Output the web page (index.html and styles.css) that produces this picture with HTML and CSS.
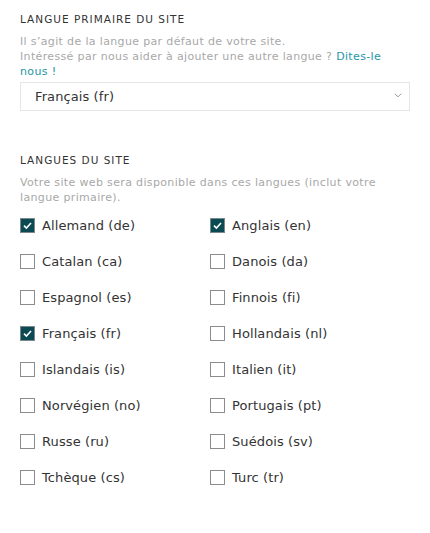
FILE: index.html
```html
<!DOCTYPE html>
<html lang="fr">
<head>
<meta charset="utf-8">
<link rel="stylesheet" href="styles.css">
</head>
<body>
<div class="page">
  <section class="group">
    <h2 class="label">LANGUE PRIMAIRE DU SITE</h2>
    <p class="help">Il s’agit de la langue par défaut de votre site.<br>Intéressé par nous aider à ajouter une autre langue ? <a href="#" class="link"><span>Dites-le</span> <span>nous !</span></a></p>
    <div class="select">
      <span>Français (fr)</span>
      <svg class="chev" width="8" height="5" viewBox="0 0 8 5"><path d="M0.8 0.8 L4 3.8 L7.2 0.8" fill="none" stroke="#9a9a9a" stroke-width="1"/></svg>
    </div>
  </section>
  <section class="group second">
    <h2 class="label">LANGUES DU SITE</h2>
    <p class="help">Votre site web sera disponible dans ces langues (inclut votre langue primaire).</p>
    <div class="grid">
      <label class="opt"><span class="box on"><svg viewBox="0 0 15 15" width="15" height="15"><path d="M4 7.6 L6.4 10 L11 5" fill="none" stroke="#fff" stroke-width="1.6"/></svg></span>Allemand (de)</label>
      <label class="opt"><span class="box on"><svg viewBox="0 0 15 15" width="15" height="15"><path d="M4 7.6 L6.4 10 L11 5" fill="none" stroke="#fff" stroke-width="1.6"/></svg></span>Anglais (en)</label>
      <label class="opt"><span class="box"></span>Catalan (ca)</label>
      <label class="opt"><span class="box"></span>Danois (da)</label>
      <label class="opt"><span class="box"></span>Espagnol (es)</label>
      <label class="opt"><span class="box"></span>Finnois (fi)</label>
      <label class="opt"><span class="box on"><svg viewBox="0 0 15 15" width="15" height="15"><path d="M4 7.6 L6.4 10 L11 5" fill="none" stroke="#fff" stroke-width="1.6"/></svg></span>Français (fr)</label>
      <label class="opt"><span class="box"></span>Hollandais (nl)</label>
      <label class="opt"><span class="box"></span>Islandais (is)</label>
      <label class="opt"><span class="box"></span>Italien (it)</label>
      <label class="opt"><span class="box"></span>Norvégien (no)</label>
      <label class="opt"><span class="box"></span>Portugais (pt)</label>
      <label class="opt"><span class="box"></span>Russe (ru)</label>
      <label class="opt"><span class="box"></span>Suédois (sv)</label>
      <label class="opt"><span class="box"></span>Tchèque (cs)</label>
      <label class="opt"><span class="box"></span>Turc (tr)</label>
    </div>
  </section>
</div>
</body>
</html>
```
FILE: styles.css
```css
html, body { margin: 0; padding: 0; background: #fff; }
body { font-family: "DejaVu Sans", "Open Sans", sans-serif; color: #333; }
.page { padding: 12px 20px 0 20px; width: 390px; }
.group { margin: 0; }
.second { margin-top: 42px; }
.label { margin: 0; font-size: 10.5px; font-weight: 400; letter-spacing: 1px; color: #333; line-height: 14px; }
.help { margin: 8px 0 0 0; font-size: 11px; letter-spacing: 0.35px; line-height: 15px; color: #a8a8a8; }
.link { color: #2596a4; text-decoration: none; }
.select { margin-top: 3px; height: 29px; box-sizing: border-box; border: 1px solid #e6e6e6; display: flex; align-items: center; justify-content: space-between; padding: 0 7px 0 14px; font-size: 13px; letter-spacing: 0.1px; color: #333; }
.chev { display: block; margin-top: -2px; }
.grid { margin-top: 2px; display: grid; grid-template-columns: 190px 200px; row-gap: 0; }
.opt { display: flex; align-items: center; height: 36px; font-size: 13px; letter-spacing: 0.1px; color: #333; gap: 7px; }
.box { width: 15px; height: 15px; box-sizing: border-box; border: 1px solid #8c8c8c; display: flex; flex: none; background: #fff; }
.box.on { background: #0b4a52; border-color: #7a8a8c; }
.box svg { display: block; margin: -1px; }
```
